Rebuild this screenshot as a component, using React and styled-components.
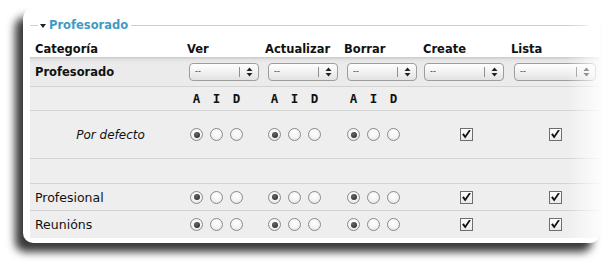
import React from 'react'
import styled, { createGlobalStyle } from 'styled-components'

const GlobalStyle = createGlobalStyle`
    html, body {
        margin : 0;
        padding : 0;
        background : #fff;
    }
    body {
        font-family : "DejaVu Sans", Verdana, sans-serif;
        color : #111;
    }
`

const COLS = '156px 78px 79px 79px 88px 88px'

const Page = styled.div`
    width : 609px;
    height : 268px;
    padding : 8px 0 0 23px;
    box-sizing : border-box;
    overflow : hidden;
`

const Card = styled.div`
    position : relative;
    width : 577px;
    height : 235px;
    box-sizing : border-box;
    padding : 10px 0 0 7px;
    background : #fff;
    border-radius : 10px;
    box-shadow : -8px 9px 9px rgba(0, 0, 0, 0.78);
    overflow : hidden;
    &::after {
        content : '';
        position : absolute;
        top : 0;
        right : 0;
        bottom : 0;
        width : 34px;
        background : linear-gradient(to right, rgba(255,255,255,0), rgba(255,255,255,0.85));
        pointer-events : none;
    }
`

const Legend = styled.div`
    display : flex;
    align-items : center;
    height : 14px;
    &::before, &::after {
        content : '';
        height : 1px;
        background : #cfcfcf;
    }
    &::before {
        width : 8px;
        margin-right : 2px;
    }
    &::after {
        flex : 1;
        margin-left : 3px;
        margin-right : 12px;
    }
`

const Caret = styled.span`
    width : 0;
    height : 0;
    border-left : 3.5px solid transparent;
    border-right : 3.5px solid transparent;
    border-top : 4px solid #222;
    margin : 1px 3px 0 0;
`

const LegendText = styled.span`
    font-size : 11.5px;
    font-weight : bold;
    color : #3f9bc4;
    line-height : 14px;
`

const Row = styled.div`
    display : grid;
    grid-template-columns : ${COLS};
    align-items : center;
    box-sizing : border-box;
    height : ${p => p.$h}px;
    background : ${p => p.$head ? '#fff' : '#eeeeee'};
    border-bottom : ${p => p.$last ? 'none' : '1px solid #d2d2d2'};
    ${p => p.$shade && `
        background : linear-gradient(#c9c9c9, #e4e4e4 3px, #ebebeb 6px);
    `}
`

const HeadCell = styled.div`
    font-size : 11.5px;
    font-weight : bold;
    padding : 9px 0 0 ${p => p.$pad || 1}px;
`

const LabelCell = styled.div`
    padding-left : 5px;
    font-size : ${p => p.$size}px;
    font-weight : ${p => p.$bold ? 'bold' : 'normal'};
    font-style : ${p => p.$italic ? 'italic' : 'normal'};
    text-align : ${p => p.$center ? 'center' : 'left'};
`

const SelectCell = styled.div`
    padding-left : ${p => p.$pad}px;
`

const SelectBox = styled.div`
    display : flex;
    align-items : center;
    box-sizing : border-box;
    width : ${p => p.$w}px;
    height : 18px;
    border : 1px solid #9d9d9d;
    border-radius : 4px;
    background : linear-gradient(#ffffff, #f1f1f1 50%, #e2e2e2);
    font-size : 8px;
    color : #333;
`

const SelectText = styled.span`
    flex : 1;
    padding-left : 5px;
    line-height : 1;
`

const SelectDivider = styled.span`
    width : 1px;
    height : 10px;
    background : #8f8f8f;
`

const SelectArrows = styled.span`
    display : flex;
    justify-content : center;
    width : 18px;
`

const Group = styled.div`
    display : flex;
    gap : 7px;
    padding-left : 4px;
`

const SubLabel = styled.span`
    width : 13px;
    text-align : center;
    font-family : "DejaVu Sans Mono", monospace;
    font-size : 12.5px;
    font-weight : bold;
`

const Radio = styled.span`
    position : relative;
    width : 13px;
    height : 13px;
    box-sizing : border-box;
    border-radius : 50%;
    border : 1px solid #8a8a8a;
    background : radial-gradient(circle at 50% 35%, #ffffff, #f3f3f3 55%, #dcdcdc);
    &::after {
        content : '';
        display : ${p => p.$on ? 'block' : 'none'};
        position : absolute;
        left : 2.5px;
        top : 2.5px;
        width : 6px;
        height : 6px;
        border-radius : 50%;
        background : radial-gradient(circle at 40% 35%, #666, #222);
    }
`

const CheckCell = styled.div`
    display : flex;
    justify-content : center;
    padding-left : ${p => p.$shift || 0}px;
`

const Check = styled.span`
    display : flex;
    align-items : center;
    justify-content : center;
    width : 13px;
    height : 13px;
    box-sizing : border-box;
    border : 1px solid #6e6e6e;
    background : linear-gradient(#ffffff, #e9e9e9);
`

const Arrows = () => (
    <svg width='7' height='10' viewBox='0 0 7 10'>
        <path d='M3.5 0.5 L6.5 4 L0.5 4 Z' fill='#222' />
        <path d='M3.5 9.5 L6.5 6 L0.5 6 Z' fill='#222' />
    </svg>
)

const Tick = () => (
    <svg width='11' height='11' viewBox='0 0 10 10'>
        <path d='M1 5 L3.8 8.6 L9 1.2 L7.2 0.8 L3.8 5.8 L2.6 3.8 Z' fill='#111' />
    </svg>
)

const Select = ({ pad, w }) => (
    <SelectCell $pad={pad}>
        <SelectBox $w={w}>
            <SelectText>--</SelectText>
            <SelectDivider />
            <SelectArrows><Arrows /></SelectArrows>
        </SelectBox>
    </SelectCell>
)

const Radios = () => (
    <Group>
        <Radio $on />
        <Radio />
        <Radio />
    </Group>
)

const Checks = () => (
    <>
        <CheckCell><Check><Tick /></Check></CheckCell>
        <CheckCell $shift={3}><Check><Tick /></Check></CheckCell>
    </>
)

const Sub = () => (
    <Group>
        <SubLabel>A</SubLabel>
        <SubLabel>I</SubLabel>
        <SubLabel>D</SubLabel>
    </Group>
)

export default function App () {
    return (
        <Page>
            <GlobalStyle />
            <Card>
                <Legend>
                    <Caret />
                    <LegendText>Profesorado</LegendText>
                </Legend>
                <Row $head $h={25} $last>
                    <HeadCell $pad={5}>Categoría</HeadCell>
                    <HeadCell>Ver</HeadCell>
                    <HeadCell>Actualizar</HeadCell>
                    <HeadCell>Borrar</HeadCell>
                    <HeadCell>Create</HeadCell>
                    <HeadCell>Lista</HeadCell>
                </Row>
                <Row $shade $h={30}>
                    <LabelCell $bold $size={11.5}>Profesorado</LabelCell>
                    <Select pad={3} w={70} />
                    <Select pad={4} w={70} />
                    <Select pad={4} w={70} />
                    <Select pad={2} w={80} />
                    <Select pad={4} w={82} />
                </Row>
                <Row $h={24}>
                    <div />
                    <Sub />
                    <Sub />
                    <Sub />
                </Row>
                <Row $h={48}>
                    <LabelCell $italic $center $size={12}>Por defecto</LabelCell>
                    <Radios />
                    <Radios />
                    <Radios />
                    <Checks />
                </Row>
                <Row $h={25} />
                <Row $h={27}>
                    <LabelCell $size={12.5}>Profesional</LabelCell>
                    <Radios />
                    <Radios />
                    <Radios />
                    <Checks />
                </Row>
                <Row $h={27} $last>
                    <LabelCell $size={12.5}>Reunións</LabelCell>
                    <Radios />
                    <Radios />
                    <Radios />
                    <Checks />
                </Row>
            </Card>
        </Page>
    )
}
